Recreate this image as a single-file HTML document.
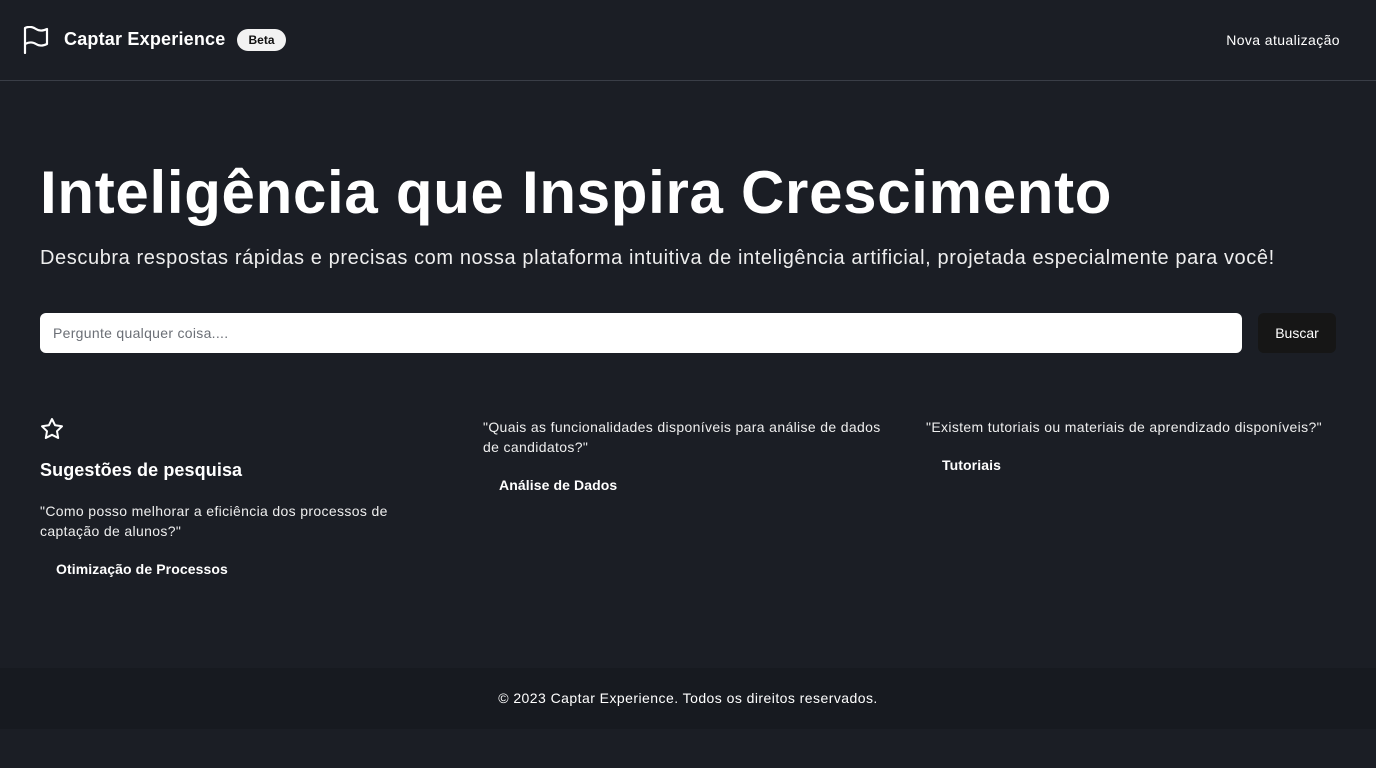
<!DOCTYPE html>
<html><head><meta charset="utf-8"><style>
*{box-sizing:border-box;margin:0;padding:0}
body{width:1376px;height:768px;background:#1b1e25;color:#fff;font-family:"Liberation Sans",sans-serif;position:relative;overflow:hidden}
header{height:81px;border-bottom:1px solid #3a3e47;position:relative}
.flag{position:absolute;left:23px;top:26px}
.brand{position:absolute;left:64px;top:29px;font-size:18px;font-weight:bold;letter-spacing:0.2px}
.beta{position:absolute;left:237px;top:29px;width:49px;height:22px;border-radius:11px;background:#f2f2f2;color:#111;font-size:12px;font-weight:bold;text-align:center;line-height:22px}
.nav{position:absolute;right:36px;top:32px;font-size:14px;letter-spacing:0.4px}
h1{position:absolute;left:40px;top:158px;font-size:60px;font-weight:bold;letter-spacing:0.7px}
.sub{position:absolute;left:40px;top:247px;font-size:20px;color:#eee;letter-spacing:0.6px}
.inp{position:absolute;left:40px;top:313px;width:1202px;height:40px;background:#fff;border-radius:6px;color:#6b6f76;font-size:14px;padding:12px 13px;letter-spacing:0.3px}
.btn{position:absolute;left:1258px;top:313px;width:78px;height:40px;background:#161616;border-radius:6px;font-size:14px;text-align:center;line-height:40px}
.t{position:absolute;font-size:14px;line-height:20px;color:#eee;letter-spacing:0.35px}
.b{position:absolute;font-size:14px;font-weight:bold;letter-spacing:0.1px}
footer{position:absolute;left:0;top:668px;width:1376px;height:61px;background:#171a20;text-align:center;font-size:14px;line-height:61px;letter-spacing:0.45px}
</style></head><body>
<header>
<svg class="flag" width="26" height="28" viewBox="0 0 26 28" fill="none" stroke="#fff" stroke-width="2.2" stroke-linejoin="round" stroke-linecap="round"><path d="M2 27V2c4-2 8-1 11 1s7 2 11 0v15c-4 2-8 2-11 0s-7-2-11 0"/></svg>
<div class="brand">Captar Experience</div>
<div class="beta">Beta</div>
<div class="nav">Nova atualização</div>
</header>
<h1>Inteligência que Inspira Crescimento</h1>
<div class="sub">Descubra respostas rápidas e precisas com nossa plataforma intuitiva de inteligência artificial, projetada especialmente para você!</div>
<div class="inp">Pergunte qualquer coisa....</div>
<div class="btn">Buscar</div>
<svg style="position:absolute;left:40px;top:417px" width="24" height="24" viewBox="0 0 24 24" fill="none" stroke="#fff" stroke-width="2" stroke-linejoin="round"><path d="M12 2l3.1 6.3 6.9 1-5 4.9 1.2 6.8L12 17.8 5.8 21l1.2-6.8-5-4.9 6.9-1z"/></svg>
<div class="b" style="left:40px;top:460px;font-size:18px">Sugestões de pesquisa</div>
<div class="t" style="left:40px;top:501px;width:380px">"Como posso melhorar a eficiência dos processos de captação de alunos?"</div>
<div class="b" style="left:56px;top:561px">Otimização de Processos</div>
<div class="t" style="left:483px;top:417px;width:410px">"Quais as funcionalidades disponíveis para análise de dados de candidatos?"</div>
<div class="b" style="left:499px;top:477px">Análise de Dados</div>
<div class="t" style="left:926px;top:417px;width:430px">"Existem tutoriais ou materiais de aprendizado disponíveis?"</div>
<div class="b" style="left:942px;top:457px">Tutoriais</div>
<footer>© 2023 Captar Experience. Todos os direitos reservados.</footer>
</body></html>
